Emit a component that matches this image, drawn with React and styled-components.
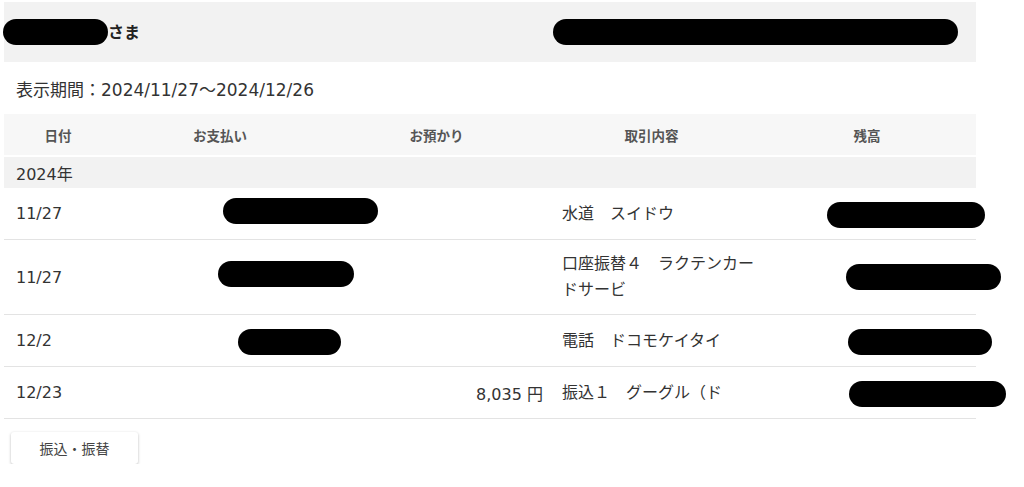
import React from 'react';
import styled, { createGlobalStyle } from 'styled-components';

const GlobalStyle = createGlobalStyle`
  body {
    margin: 0;
    background: #fff;
    font-family: "DejaVu Sans", "Noto Sans CJK JP", sans-serif;
    color: #333;
  }
`;

const Page = styled.div`
  width: 972px;
  padding: 2px 0 0 4px;
`;

const Greeting = styled.div`
  height: 60px;
  background: #f2f2f2;
  display: flex;
  align-items: center;
`;

const Honorific = styled.span`
  font-family: "Noto Sans CJK JP", sans-serif;
  font-size: 16px;
  font-weight: 700;
  color: #222;
  margin-right: auto;
  transform: translateY(-1px);
`;

const Pill = styled.span`
  display: inline-block;
  flex-shrink: 0;
  width: ${(p) => p.$w}px;
  height: 26px;
  margin-left: ${(p) => p.$x || 0}px;
  margin-right: ${(p) => p.$mr || 0}px;
  border-radius: 13px;
  background: #000;
  transform: translateY(${(p) => p.$dy || 0}px);
`;

const Period = styled.div`
  height: 52px;
  display: flex;
  align-items: center;
  padding-left: 12px;
  font-size: 17px;
  color: #333;
`;

const Row = styled.div`
  display: grid;
  grid-template-columns: 108px 216px 217px 213px 218px;
  align-items: center;
`;

const HeadRow = styled(Row)`
  height: 41px;
  background: #f7f7f7;
  margin-bottom: 2px;
`;

const HeadCell = styled.div`
  text-align: center;
  font-family: "Noto Sans CJK JP", sans-serif;
  font-size: 13.5px;
  font-weight: 700;
  color: #555;
`;

const YearRow = styled.div`
  height: 31px;
  background: #f2f2f2;
  display: flex;
  align-items: center;
  padding-left: 12px;
  font-size: 16px;
  color: #333;
`;

const BodyRow = styled(Row)`
  min-height: 51px;
  border-bottom: 1px solid #e3e3e3;
  font-size: 16px;
  color: #333;
`;

const Cell = styled.div`
  display: flex;
  align-items: center;
  padding: ${(p) => p.$pad || '0'};
  justify-content: ${(p) => (p.$right ? 'flex-end' : 'flex-start')};
`;

const Desc = styled.div`
  padding: 11px 4px 11px 17px;
  line-height: 26px;
`;

const ActionButton = styled.button`
  margin: 13px 0 0 7px;
  width: 127px;
  height: 32px;
  background: #fff;
  border: none;
  border-radius: 3px;
  box-shadow: 0 1px 3px rgba(0, 0, 0, 0.28);
  font-family: "Noto Sans CJK JP", sans-serif;
  font-size: 14px;
  color: #444;
`;

const rows = [
  { date: '11/27', pay: { x: 111, w: 155, dy: -3 }, desc: '水道　スイドウ', bal: { x: 69, w: 158, dy: 1 } },
  { date: '11/27', pay: { x: 106, w: 136, dy: -3 }, desc: '口座振替４　ラクテンカードサービ', bal: { x: 88, w: 155, dy: 0 } },
  { date: '12/2', pay: { x: 126, w: 103, dy: 1 }, desc: '電話　ドコモケイタイ', bal: { x: 90, w: 144, dy: 1 } },
  { date: '12/23', deposit: '8,035 円', desc: '振込１　グーグル（ド', bal: { x: 91, w: 157, dy: 1 } },
];

export default function App() {
  return (
    <Page>
      <GlobalStyle />
      <Greeting>
        <Pill $w={105} $x={-1} />
        <Honorific>さま</Honorific>
        <Pill $w={405} $mr={18} />
      </Greeting>
      <Period>表示期間：2024/11/27～2024/12/26</Period>
      <HeadRow>
        <HeadCell>日付</HeadCell>
        <HeadCell>お支払い</HeadCell>
        <HeadCell>お預かり</HeadCell>
        <HeadCell>取引内容</HeadCell>
        <HeadCell>残高</HeadCell>
      </HeadRow>
      <YearRow>2024年</YearRow>
      {rows.map((r, i) => (
        <BodyRow key={i}>
          <Cell $pad="0 0 0 12px">{r.date}</Cell>
          <Cell>{r.pay && <Pill $x={r.pay.x} $w={r.pay.w} $dy={r.pay.dy} />}</Cell>
          <Cell $right $pad="0 2px 0 0">{r.deposit}</Cell>
          <Desc>{r.desc}</Desc>
          <Cell><Pill $x={r.bal.x} $w={r.bal.w} $dy={r.bal.dy} /></Cell>
        </BodyRow>
      ))}
      <ActionButton>振込・振替</ActionButton>
    </Page>
  );
}
